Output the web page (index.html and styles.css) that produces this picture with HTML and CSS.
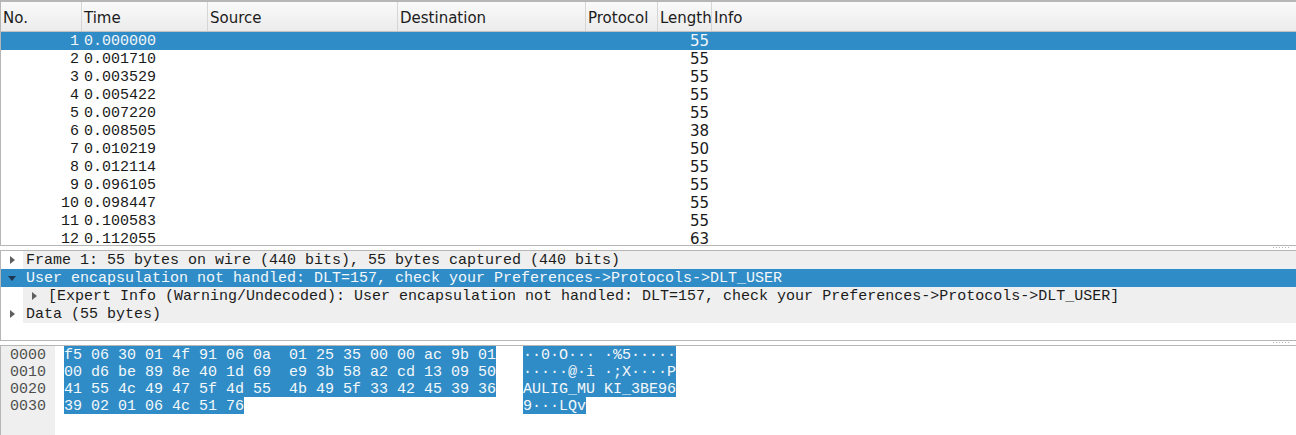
FILE: index.html
```html
<!DOCTYPE html>
<html>
<head>
<meta charset="utf-8">
<link rel="stylesheet" href="styles.css">
</head>
<body>
<div class="win">
  <section class="plist">
    <div class="phead">
      <div class="hc">No.</div>
      <div class="hc">Time</div>
      <div class="hc">Source</div>
      <div class="hc">Destination</div>
      <div class="hc">Protocol</div>
      <div class="hc">Length</div>
      <div class="hc last">Info</div>
    </div>
    <div class="prows">
      <div class="prow sel"><span class="no">1</span><span class="time">0.000000</span><span></span><span></span><span></span><span class="len">55</span><span></span></div>
      <div class="prow"><span class="no">2</span><span class="time">0.001710</span><span></span><span></span><span></span><span class="len">55</span><span></span></div>
      <div class="prow"><span class="no">3</span><span class="time">0.003529</span><span></span><span></span><span></span><span class="len">55</span><span></span></div>
      <div class="prow"><span class="no">4</span><span class="time">0.005422</span><span></span><span></span><span></span><span class="len">55</span><span></span></div>
      <div class="prow"><span class="no">5</span><span class="time">0.007220</span><span></span><span></span><span></span><span class="len">55</span><span></span></div>
      <div class="prow"><span class="no">6</span><span class="time">0.008505</span><span></span><span></span><span></span><span class="len">38</span><span></span></div>
      <div class="prow"><span class="no">7</span><span class="time">0.010219</span><span></span><span></span><span></span><span class="len">50</span><span></span></div>
      <div class="prow"><span class="no">8</span><span class="time">0.012114</span><span></span><span></span><span></span><span class="len">55</span><span></span></div>
      <div class="prow"><span class="no">9</span><span class="time">0.096105</span><span></span><span></span><span></span><span class="len">55</span><span></span></div>
      <div class="prow"><span class="no">10</span><span class="time">0.098447</span><span></span><span></span><span></span><span class="len">55</span><span></span></div>
      <div class="prow"><span class="no">11</span><span class="time">0.100583</span><span></span><span></span><span></span><span class="len">55</span><span></span></div>
      <div class="prow"><span class="no">12</span><span class="time">0.112055</span><span></span><span></span><span></span><span class="len">63</span><span></span></div>
    </div>
  </section>

  <div class="split"><span class="grip"></span></div>

  <section class="details">
    <div class="drow">
      <span class="branch"><svg width="5" height="8" viewBox="0 0 5 8"><polygon points="0,0 5,4 0,8" fill="#5f5f5f"/></svg></span>
      <span class="dtext">Frame 1: 55 bytes on wire (440 bits), 55 bytes captured (440 bits)</span>
    </div>
    <div class="drow sel">
      <span class="branch"><svg width="8" height="5" viewBox="0 0 8 5"><polygon points="0,0 8,0 4,5" fill="#1d3550"/></svg></span>
      <span class="dtext">User encapsulation not handled: DLT=157, check your Preferences-&gt;Protocols-&gt;DLT_USER</span>
    </div>
    <div class="drow">
      <span class="indent"></span>
      <span class="branch sub"><svg width="5" height="8" viewBox="0 0 5 8"><polygon points="0,0 5,4 0,8" fill="#5f5f5f"/></svg></span>
      <span class="dtext">[Expert Info (Warning/Undecoded): User encapsulation not handled: DLT=157, check your Preferences-&gt;Protocols-&gt;DLT_USER]</span>
    </div>
    <div class="drow">
      <span class="branch"><svg width="5" height="8" viewBox="0 0 5 8"><polygon points="0,0 5,4 0,8" fill="#5f5f5f"/></svg></span>
      <span class="dtext">Data (55 bytes)</span>
    </div>
  </section>

  <div class="split"><span class="grip"></span></div>

  <section class="bytes">
    <div class="offsets">
      <div class="ol">0000</div>
      <div class="ol">0010</div>
      <div class="ol">0020</div>
      <div class="ol">0030</div>
    </div>
    <div class="hex">
      <div class="hl"><div class="hxcol"><span class="hs">f5 06 30 01 4f 91 06 0a  01 25 35 00 00 ac 9b 01</span></div><div class="ascol"><span class="hs">··0·O··· ·%5·····</span></div></div>
      <div class="hl"><div class="hxcol"><span class="hs">00 d6 be 89 8e 40 1d 69  e9 3b 58 a2 cd 13 09 50</span></div><div class="ascol"><span class="hs">·····@·i ·;X····P</span></div></div>
      <div class="hl"><div class="hxcol"><span class="hs">41 55 4c 49 47 5f 4d 55  4b 49 5f 33 42 45 39 36</span></div><div class="ascol"><span class="hs">AULIG_MU KI_3BE96</span></div></div>
      <div class="hl"><div class="hxcol"><span class="hs">39 02 01 06 4c 51 76</span></div><div class="ascol"><span class="hs">9···LQv</span></div></div>
    </div>
  </section>
</div>
</body>
</html>
```
FILE: styles.css
```css
html, body {
  margin: 0;
  padding: 0;
  background: #ffffff;
}

body {
  font-family: "DejaVu Sans", sans-serif;
  color: #1e1e1e;
}

.win {
  width: 1296px;
  height: 435px;
  overflow: hidden;
  display: flex;
  flex-direction: column;
}

/* ---------- packet list ---------- */
.plist {
  flex: none;
  height: 246px;
  box-sizing: border-box;
  border-top: 2px solid #b6b6b6;
  border-bottom: 1px solid #b6b6b6;
  border-left: 1px solid #b6b6b6;
  display: flex;
  flex-direction: column;
  overflow: hidden;
}

.phead,
.prow {
  display: grid;
  grid-template-columns: 81px 126px 190px 188px 72px 54px 1fr;
}

.phead {
  flex: none;
  height: 30px;
  box-sizing: border-box;
  border-bottom: 1px solid #c2c2c2;
  background: linear-gradient(#fafafa, #ebebeb);
}

.hc {
  box-sizing: border-box;
  border-right: 1px solid #d6d6d6;
  padding: 3px 0 0 2px;
  line-height: 26px;
  font-size: 15px;
  color: #1c1c1c;
  white-space: nowrap;
  overflow: hidden;
}

.hc.last {
  border-right: none;
}

.prows {
  flex: 1;
  overflow: hidden;
}

.prow {
  height: 18px;
  font-size: 15px;
  color: #1a1a1a;
  white-space: nowrap;
}

.prow > span {
  box-sizing: border-box;
  height: 18px;
  padding-top: 1px;
  line-height: 18px;
}

.prow.sel {
  background: #308cc6;
  color: #f2f6fa;
}

.no {
  font-family: "Liberation Mono", monospace;
  text-align: right;
  padding-right: 3px;
}

.time {
  font-family: "Liberation Mono", monospace;
  padding-left: 2px;
}

.prow > .len {
  font-family: "DejaVu Sans", sans-serif;
  text-align: right;
  padding-right: 3px;
  padding-top: 0;
}

/* ---------- splitters ---------- */
.split {
  flex: none;
  height: 4px;
  display: flex;
  justify-content: flex-end;
  align-items: flex-start;
  padding-right: 7px;
}

.grip {
  margin-top: 1px;
  width: 16px;
  height: 1px;
  background: repeating-linear-gradient(90deg, #b3b3b3 0 1px, transparent 1px 3px);
}

/* ---------- details tree ---------- */
.details {
  flex: none;
  height: 91px;
  box-sizing: border-box;
  border-top: 1px solid #b6b6b6;
  border-bottom: 1px solid #b6b6b6;
  border-left: 1px solid #b6b6b6;
  font-family: "Liberation Mono", monospace;
  font-size: 15px;
  color: #1c1c1c;
  overflow: hidden;
}

.drow {
  display: flex;
  height: 18px;
  white-space: pre;
}

.branch {
  flex: none;
  width: 22px;
  display: flex;
  align-items: center;
  justify-content: center;
}

.branch.sub {
  background: #efefef;
}

.indent {
  flex: none;
  width: 22px;
}

.dtext {
  flex: 1;
  box-sizing: border-box;
  height: 18px;
  padding-top: 1px;
  line-height: 18px;
  background: #efefef;
  padding-left: 3px;
}

.drow.sel,
.drow.sel .dtext {
  background: #308cc6;
  color: #f4f8fb;
}

/* ---------- bytes pane ---------- */
.bytes {
  flex: 1;
  display: flex;
  border-top: 1px solid #b6b6b6;
  border-left: 1px solid #b6b6b6;
  font-family: "Liberation Mono", monospace;
  font-size: 15px;
}

.offsets {
  flex: none;
  width: 54px;
  box-sizing: border-box;
  padding-left: 9px;
  background: #efefef;
  color: #4e4e4e;
}

.ol {
  box-sizing: border-box;
  height: 17px;
  padding-top: 1px;
  line-height: 17px;
  white-space: pre;
}

.hex {
  padding-left: 9px;
  color: #1c1c1c;
}

.hl {
  display: flex;
  height: 17px;
}

.hxcol {
  flex: none;
  width: 432px;
  display: flex;
}

.ascol {
  flex: none;
  margin-left: 27px;
  display: flex;
}

.hs {
  box-sizing: border-box;
  height: 17px;
  padding-top: 1px;
  line-height: 17px;
  white-space: pre;
  background: #308cc6;
  color: #f4f8fb;
}
```
